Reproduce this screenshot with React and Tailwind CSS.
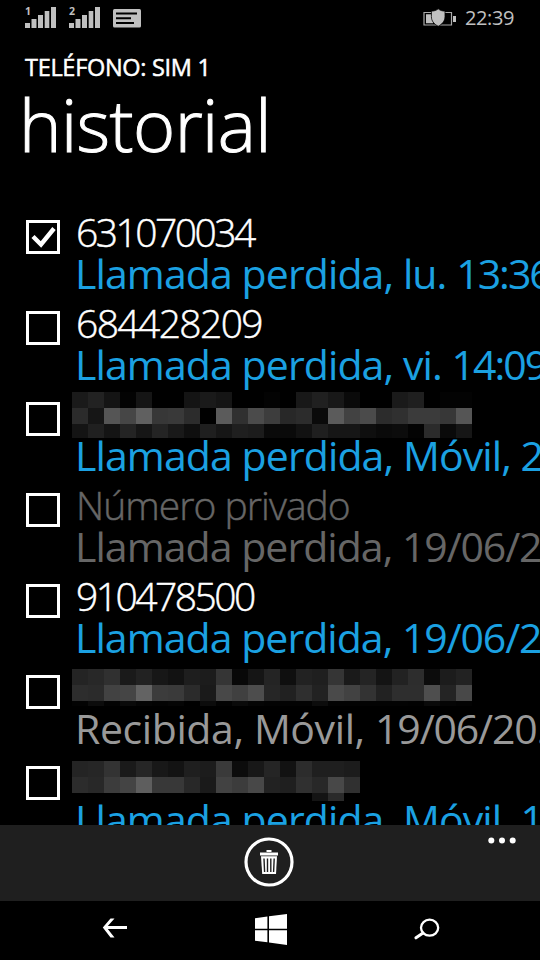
const mosaicA = [
  '1a 22 14 03 15 00 00 14 1a 15 00 00 03 00 18 20 18 0a 00 00 1a 1f 00 03 03',
  '2b 16 55 46 60 37 39 2c 00 5b 30 4b 3d 28 2c 0a 5b 42 4b 2c 30 3b 3b 37 55',
  '14 20 14 24 16 24 19 0f 1f 16 1f 1c 0a 0a 12 1f 16 16 0f 0a 0c 03 2b 0a 16',
];
const mosaicB = [
  '24 28 30 1a 22 17 12 1e 1c 35 08 15 24 0f 22 1f 35 1a 24 14 22 2d 0c 1c 22',
  '2d 2b 42 45 63 3c 3a 2b 1a 48 40 4d 26 21 2f 22 4a 42 33 22 2e 2e 4e 24 48',
  '03 0c 03 0a 05 03 05 00 0c 03 0a 05 03 03 03 0c 03 03 03 03 03 02 0a 05 03',
];
const mosaicC = [
  '24 26 33 1a 26 18 13 1f 1c 3a 0c 18 25 12 2c 1f 1f 1c',
  '2c 28 3c 44 5e 38 38 28 1a 42 3c 48 22 1f 30 28 48 30',
  '00 00 00 00 00 00 00 00 00 00 00 00 00 00 00 14 2a 00',
];

const BLUE = 'tracking-[-0.9px] text-[#1ba1e2]';
const calls = [
  { number: '631070034', spacing: 'tracking-[-2.5px]', detail: 'Llamada perdida, lu. ', time: '13:36', color: BLUE, checked: true },
  { number: '684428209', spacing: 'tracking-[-1.6px]', detail: 'Llamada perdida, vi. ', time: '14:09', color: BLUE },
  { mosaic: mosaicA, offset: 'pt-0', last: 'h-[14px]', detail: 'Llamada perdida, Móvil, ', time: '21/06/2015', color: BLUE },
  { number: 'Número privado', spacing: 'tracking-[-0.95px] text-[#666666]', detail: 'Llamada perdida, ', time: '19/06/2015', color: 'tracking-[-0.95px] text-[#666666]' },
  { number: '910478500', spacing: 'tracking-[-2.5px]', detail: 'Llamada perdida, ', time: '19/06/2015', color: 'tracking-[-0.95px] text-[#1ba1e2]' },
  { mosaic: mosaicB, offset: 'pt-[4px]', last: 'h-[5px]', detail: 'Recibida, Móvil, ', time: '19/06/20...', color: 'tracking-[-0.4px] text-[#999999]' },
  { mosaic: mosaicC, offset: 'pt-[5px]', last: 'h-[8px]', detail: 'Llamada perdida, Móvil, ', time: '19/06/2015', color: BLUE },
];

function Mosaic({ rows, last }) {
  return (
    <div className="-ml-[4px] flex flex-col">
      {rows.map((row, i) => (
        <div key={i} className={`flex shrink-0 ${i === 2 ? last : 'h-4'}`}>
          {row.split(' ').map((v, k) => (
            <div key={k} className="w-4 shrink-0" style={{ backgroundColor: `#${v}${v}${v}` }} />
          ))}
        </div>
      ))}
    </div>
  );
}

function Signal({ label }) {
  return (
    <svg className="overflow-visible" width="32" height="22" viewBox="0 0 32 22" fill="#c0c0c0">
      <text x="0" y="8" fontSize="10.5" fontWeight="700" fontFamily="Open Sans">{label}</text>
      <rect x="0" y="16" width="5" height="5" />
      <rect x="6.5" y="12" width="5" height="9" />
      <rect x="13" y="8" width="5" height="13" />
      <rect x="19.7" y="4" width="4.6" height="17" />
      <rect x="26" y="0" width="5" height="21" />
    </svg>
  );
}

function Call({ call }) {
  return (
    <li className="flex h-[91px] shrink-0 pl-[26px]">
      <div className="mt-[10px] h-[34px] w-[34px] shrink-0 border-3 border-white">
        {call.checked && (
          <svg width="28" height="28" viewBox="0 0 28 28" fill="none" stroke="#fff" strokeWidth="4.4">
            <path d="M4 13.5 12 21.5 25 5.5" />
          </svg>
        )}
      </div>
      <div className="ml-4 w-[464px] shrink-0 whitespace-pre">
        <div className={`h-[42px] ${call.offset ?? 'pt-px'}`}>
          {call.mosaic ? (
            <Mosaic rows={call.mosaic} last={call.last} />
          ) : (
            <div className={`text-[39px] leading-[42px] font-light [-webkit-text-stroke:0.45px] ${call.spacing}`}>{call.number}</div>
          )}
        </div>
        <div className={`-ml-px text-[41px] leading-[42px] ${call.color}`}>
          {call.detail}
          <span className={call.time.includes(':') ? 'tracking-[-2px]' : 'tracking-[-1.15px]'}>{call.time}</span>
        </div>
      </div>
    </li>
  );
}

export default function App() {
  return (
    <div className="flex h-[960px] w-[540px] flex-col overflow-hidden bg-black font-['Open_Sans','Noto_Sans',sans-serif] text-white">
      <div className="flex h-9 shrink-0 items-start pl-[25px]">
        <div className="mt-[7px] flex gap-3">
          <Signal label="1" />
          <Signal label="2" />
        </div>
        <svg className="mt-[9px] ml-[12px]" width="28" height="19" viewBox="0 0 28 19">
          <rect width="28" height="18.5" rx="1.5" fill="#c0c0c0" />
          <path d="M3 4.5h21M3 9.3h15M3 14h18" stroke="#000" strokeWidth="2" />
        </svg>
        <svg className="mt-[8px] ml-auto" width="34" height="20" viewBox="0 0 34 20">
          <path d="M1 4.5h27.5v12.5H1z" fill="none" stroke="#aaa" strokeWidth="1.2" />
          <path d="M3 6.3h7v9H3zM30 8h3v6h-3z" fill="#c0c0c0" />
          <path d="M15.2.8c2 1.7 4 2.2 6.8 2.3v5.5c0 4.500-2.700 7.500-6.800 9.700-4.100-2.200-6.800-5.200-6.800-9.700V3.100c2.800-.1 4.800-.6 6.800-2.300z" fill="#c0c0c0" stroke="#000" strokeWidth=".8" />
        </svg>
        <div className="mt-[4px] ml-[8px] w-[75px] text-[20px] leading-[28px] tracking-[-0.4px] text-[#c0c0c0]">22:39</div>
      </div>
      <header className="h-[174px] shrink-0 pt-[17px] whitespace-nowrap">
        <div className="pl-[25px] text-[23.5px] leading-7 tracking-[-0.3px] [-webkit-text-stroke:0.5px]">TELÉFONO: SIM 1</div>
        <h1 className="pt-px pl-[19px] text-[72px] leading-[84px] font-light tracking-[-0.6px] [-webkit-text-stroke:1px]">historial</h1>
      </header>
      <ul className="flex h-[615px] shrink-0 flex-col overflow-hidden">
        {calls.map((call, i) => (
          <Call key={i} call={call} />
        ))}
      </ul>
      <div className="grid h-[76px] shrink-0 grid-cols-3 bg-[#1f1f1f]">
        <span />
        <svg className="mt-[12px] ml-[64px]" width="50" height="50" viewBox="0 0 50 50">
          <circle cx="25" cy="25" r="23" fill="none" stroke="#fff" strokeWidth="3.2" />
          <path d="M22.5 13h5v2h-5zM16 15.5h18v3H16z" fill="#fff" />
          <path d="M17 19.2h16l-1 17.8H18.2z" fill="#fff" />
          <path d="M20 21.5l.6 13.5M23.5 21.5v13.5M26.8 21.5v13.5M30.2 21.5l-.6 13.5" stroke="#1f1f1f" strokeWidth="1.4" />
        </svg>
        <svg className="mt-[12px] ml-[128px]" width="28" height="8" viewBox="0 0 28 8" fill="#fff">
          <circle cx="3.3" cy="3.5" r="3" />
          <circle cx="14" cy="3.5" r="3" />
          <circle cx="24.7" cy="3.5" r="3" />
        </svg>
      </div>
      <nav className="flex h-[59px] shrink-0 items-start">
        <svg className="mt-[17px] ml-[102px]" width="26" height="21" viewBox="0 0 26 21">
          <path d="M0.8 9.5 8.5 0.5h4L5.8 8H25v3H5.8l6.7 8.5h-4z" fill="#fff" />
        </svg>
        <svg className="mt-[13px] ml-[127px]" width="32" height="31" viewBox="0 0 32 31" fill="#fff">
          <path d="M0 4.3 12.4 2.6V14.8H0zM14 2.3 32 0V14.8H14zM0 16.2H12.4V28.3L0 26.7zM14 16.2H32V31L14 28.6z" />
        </svg>
        <svg className="mt-[17px] ml-[127px]" width="26" height="22" viewBox="0 0 26 22" fill="none" stroke="#fff">
          <ellipse cx="15.6" cy="9.7" rx="8.6" ry="8" strokeWidth="2.3" />
          <path d="M9 15 2 19.8" strokeWidth="3" strokeLinecap="round" />
        </svg>
      </nav>
    </div>
  );
}
